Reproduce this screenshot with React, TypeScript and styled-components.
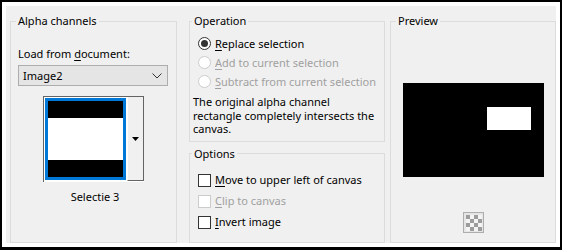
import React from "react";
import styled, { createGlobalStyle } from "styled-components";

const Global = createGlobalStyle`
  html, body { margin: 0; padding: 0; background: #fff; }
  body { font-family: "Noto Sans", "Open Sans", sans-serif; font-size: 11px; color: #000; }
  * { box-sizing: border-box; }
`;

const Frame = styled.div`
  width: 562px;
  height: 250px;
  border: 2px solid #000;
  border-bottom-width: 3px;
  background: #fff;
  padding: 4px;
`;

const Dialog = styled.div`
  height: 100%;
  background: #f0f0f0;
  display: flex;
  align-items: stretch;
  padding: 7px 0 0 4px;
`;

const Group = styled.fieldset<{ $pl?: number; $pb?: number; $w?: number; $ml?: number; $grow?: boolean }>`
  margin: 0 0 0 ${(p) => p.$ml ?? 0}px;
  min-width: 0;
  width: ${(p) => (p.$w ? `${p.$w}px` : "auto")};
  flex: ${(p) => (p.$grow ? "1" : "none")};
  border: 1px solid #dcdcdc;
  padding: 0 4px ${(p) => p.$pb ?? 4}px ${(p) => p.$pl ?? 4}px;
  display: flex;
  flex-direction: column;
`;

const Legend = styled.legend<{ $shift?: number }>`
  padding: 0 2px;
  margin-left: ${(p) => p.$shift ?? 0}px;
  line-height: 16px;
  font-size: 11px;
`;

const Label = styled.div`
  margin-top: 17px;
  line-height: 16px;
`;

const U = styled.span`
  text-decoration: underline;
  text-underline-offset: 2px;
  text-decoration-thickness: 1px;
`;

const Combo = styled.div`
  margin-top: 3px;
  height: 21px;
  width: 150px;
  border: 1px solid #adadad;
  background: #e5e5e5;
  display: flex;
  align-items: center;
  justify-content: space-between;
  padding: 0 5px 0 4px;
  line-height: 16px;
`;

const Thumb = styled.div`
  margin: 10px 0 0 25px;
  width: 101px;
  height: 86px;
  display: flex;
  border-top: 1px solid #646464;
  border-left: 1px solid #646464;
  background: #fff;
`;

const Well = styled.div`
  width: 83px;
  padding: 1px;
  background: #fff;
`;

const Selected = styled.div`
  width: 81px;
  height: 82px;
  border: 3px solid #0078d7;
  display: flex;
  flex-direction: column;
`;

const Band = styled.div<{ $h: number; $c: string }>`
  height: ${(p) => p.$h}px;
  background: ${(p) => p.$c};
  flex: none;
`;

const DropBtn = styled.div`
  width: 17px;
  height: 84px;
  background: #f0f0f0;
  border-left: 1px solid #ffffff;
  border-right: 1px solid #646464;
  border-bottom: 1px solid #646464;
  display: flex;
  align-items: center;
  justify-content: center;
`;

const Caption = styled.div`
  margin-top: 7px;
  text-align: center;
  line-height: 16px;
`;

const Col2 = styled.div`
  display: flex;
  flex-direction: column;
  gap: 4px;
  margin-left: 12px;
  width: 196px;
  flex: none;
`;

const Radios = styled.div`
  margin-top: 5px;
  display: flex;
  flex-direction: column;
  padding-left: 5px;
`;

const OptRow = styled.div<{ $h: number; $disabled?: boolean }>`
  height: ${(p) => p.$h}px;
  display: flex;
  align-items: center;
  gap: 4px;
  color: ${(p) => (p.$disabled ? "#a0a0a0" : "#000")};
  line-height: 16px;
  white-space: nowrap;
`;

const RadioDot = styled.span<{ $checked?: boolean; $disabled?: boolean }>`
  width: 13px;
  height: 13px;
  border-radius: 50%;
  border: 1px solid ${(p) => (p.$disabled ? "#cccccc" : "#333333")};
  background: #fff;
  display: flex;
  align-items: center;
  justify-content: center;
  flex: none;
  &::after {
    content: "";
    width: 7px;
    height: 7px;
    border-radius: 50%;
    background: #333;
    display: ${(p) => (p.$checked ? "block" : "none")};
  }
`;

const Box = styled.span<{ $disabled?: boolean }>`
  width: 13px;
  height: 13px;
  border: 1px solid ${(p) => (p.$disabled ? "#cccccc" : "#333333")};
  background: #fff;
  flex: none;
`;

const Para = styled.p`
  margin: 4px 0 0 0;
  line-height: 13.5px;
  width: 186px;
`;

const Checks = styled.div`
  margin-top: 8px;
  display: flex;
  flex-direction: column;
  padding-left: 5px;
`;

const PreviewBox = styled.div`
  margin: 54px 0 0 12px;
  width: 141px;
  height: 94px;
  background: #000;
  display: flex;
  justify-content: flex-end;
  padding: 24px 13px 0 0;
  flex: none;
`;

const PreviewHole = styled.div`
  width: 44px;
  height: 23px;
  background: #fff;
`;

const IconBtn = styled.div`
  margin: 35px 0 0 72px;
  width: 21px;
  height: 21px;
  border: 1px solid #adadad;
  background: #e5e5e5;
  display: flex;
  align-items: center;
  justify-content: center;
`;

function Checker() {
  const cells = [];
  for (let r = 0; r < 4; r++)
    for (let c = 0; c < 4; c++)
      cells.push(
        <rect key={`${r}-${c}`} x={c * 4} y={r * 4} width={4} height={4} fill={(r + c) % 2 === 0 ? "#9c9c9c" : "#f4f4f4"} />
      );
  return (
    <svg width="16" height="16" viewBox="0 0 16 16">
      {cells}
    </svg>
  );
}

export default function App() {
  return (
    <>
      <Global />
      <Frame>
        <Dialog>
          <Group $pl={7} $w={167}>
            <Legend $shift={-2}>Alpha channels</Legend>
            <Label>
              Load from <U>d</U>ocument:
            </Label>
            <Combo>
              <span>Image2</span>
              <svg width="10" height="6" viewBox="0 0 10 6">
                <path d="M0.5 0.5 L5 5 L9.5 0.5" fill="none" stroke="#333" strokeWidth="1" />
              </svg>
            </Combo>
            <Thumb>
              <Well>
                <Selected>
                  <Band $h={17} $c="#000" />
                  <Band $h={42} $c="#fff" />
                  <Band $h={17} $c="#000" />
                </Selected>
              </Well>
              <DropBtn>
                <svg width="7" height="4" viewBox="0 0 7 4">
                  <path d="M0 0 H7 L3.5 4 Z" fill="#000" />
                </svg>
              </DropBtn>
            </Thumb>
            <Caption>Selectie 3</Caption>
          </Group>
          <Col2>
            <Group $pl={3} $pb={5}>
              <Legend $shift={-1}>Operation</Legend>
              <Radios>
                <OptRow $h={19}>
                  <RadioDot $checked />
                  <span>
                    <U>R</U>eplace selection
                  </span>
                </OptRow>
                <OptRow $h={19} $disabled>
                  <RadioDot $disabled />
                  <span>
                    <U>A</U>dd to current selection
                  </span>
                </OptRow>
                <OptRow $h={19} $disabled>
                  <RadioDot $disabled />
                  <span>
                    <U>S</U>ubtract from current selection
                  </span>
                </OptRow>
              </Radios>
              <Para>The original alpha channel rectangle completely intersects the canvas.</Para>
            </Group>
            <Group $pl={3} $grow>
              <Legend $shift={-1}>Options</Legend>
              <Checks>
                <OptRow $h={21}>
                  <Box />
                  <span>
                    <U>M</U>ove to upper left of canvas
                  </span>
                </OptRow>
                <OptRow $h={21} $disabled>
                  <Box $disabled />
                  <span>
                    <U>C</U>lip to canvas
                  </span>
                </OptRow>
                <OptRow $h={21}>
                  <Box />
                  <span>
                    <U>I</U>nvert image
                  </span>
                </OptRow>
              </Checks>
            </Group>
          </Col2>
          <Group $pl={0} $ml={5} $w={166}>
            <Legend $shift={5}>Preview</Legend>
            <PreviewBox>
              <PreviewHole />
            </PreviewBox>
            <IconBtn>
              <Checker />
            </IconBtn>
          </Group>
        </Dialog>
      </Frame>
    </>
  );
}
